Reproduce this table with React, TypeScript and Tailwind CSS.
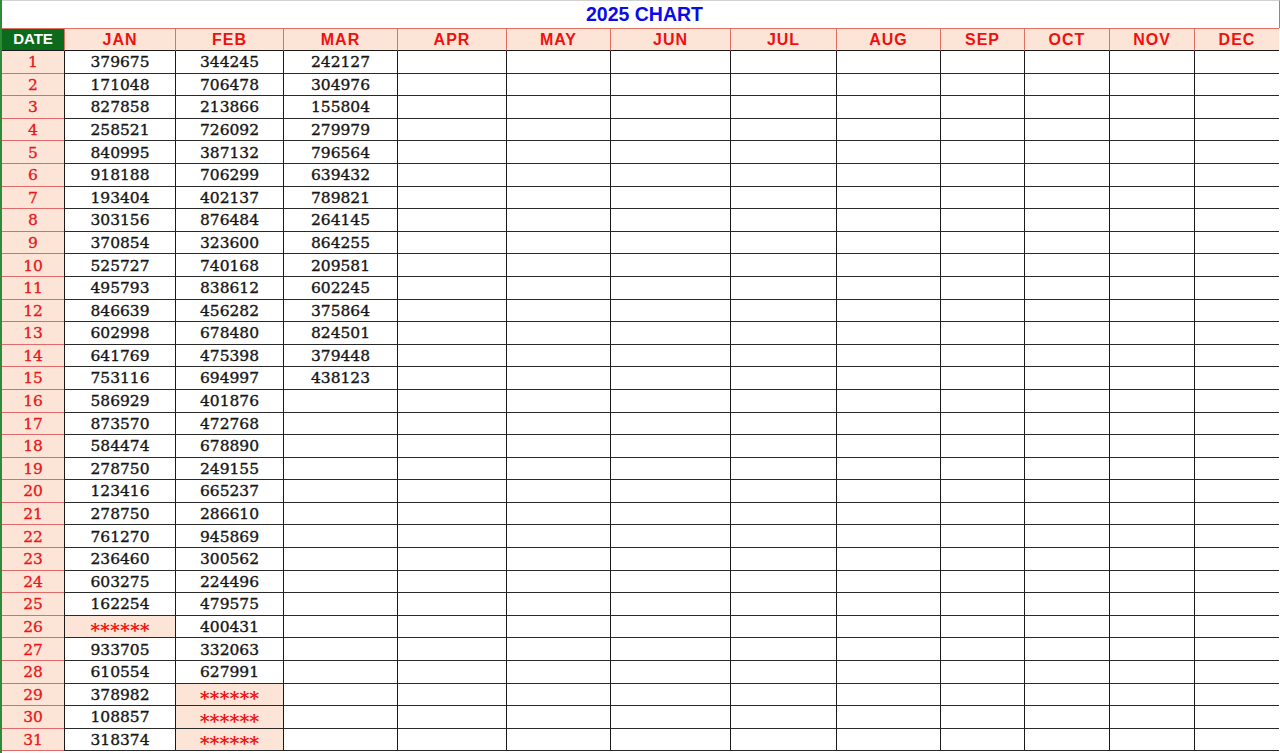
import React from 'react';

const MONTHS = ['JAN', 'FEB', 'MAR', 'APR', 'MAY', 'JUN', 'JUL', 'AUG', 'SEP', 'OCT', 'NOV', 'DEC'];

const STAR = '******';

// results per month, indexed by day - 1
const DATA: Record<string, string[]> = {
  JAN: [
    '379675', '171048', '827858', '258521', '840995', '918188', '193404', '303156', '370854', '525727',
    '495793', '846639', '602998', '641769', '753116', '586929', '873570', '584474', '278750', '123416',
    '278750', '761270', '236460', '603275', '162254', STAR, '933705', '610554', '378982', '108857', '318374',
  ],
  FEB: [
    '344245', '706478', '213866', '726092', '387132', '706299', '402137', '876484', '323600', '740168',
    '838612', '456282', '678480', '475398', '694997', '401876', '472768', '678890', '249155', '665237',
    '286610', '945869', '300562', '224496', '479575', '400431', '332063', '627991', STAR, STAR, STAR,
  ],
  MAR: [
    '242127', '304976', '155804', '279979', '796564', '639432', '789821', '264145', '864255', '209581',
    '602245', '375864', '824501', '379448', '438123',
  ],
};

const serif = { fontFamily: '"DejaVu Serif", serif' };

export default function App() {
  const days = Array.from({ length: 31 }, (_, i) => i + 1);

  return (
    <div
      className="w-[1280px] h-[753px] overflow-hidden bg-white border-l-2 border-l-[#2f8a3a]"
      style={{ fontFamily: '"Liberation Sans", Arial, sans-serif' }}
    >
      {/* title row */}
      <div className="h-[28px] w-[1278px] flex items-center justify-center border-t border-t-[#d0d0d0] border-r border-r-[#8a8a8a]">
        <span className="text-[19.5px] font-bold text-[#0b0be8] pl-[8px]">2025 CHART</span>
      </div>

      <div className="grid grid-cols-[62px_111px_108px_114px_109px_104px_120px_106px_104px_84px_85px_85px_85px] grid-rows-[23px_repeat(31,22.6px)]">
        {/* header */}
        <div className="bg-[#0b6a1c] text-white font-bold text-[15px] flex items-center justify-center border-t border-t-[#e07060] border-b border-b-[#1a1a1a]">
          DATE
        </div>
        {MONTHS.map((m) => (
          <div
            key={m}
            className="bg-[#fce4d6] text-[#f01010] font-bold text-[16px] tracking-[1px] flex items-center justify-center border-t border-t-[#e07060] border-l border-l-[#e07060] border-b border-b-[#1a1a1a]"
          >
            {m}
          </div>
        ))}

        {/* data rows */}
        {days.map((d) => (
          <React.Fragment key={d}>
            <div
              className="pt-[2px] bg-[#fce4d6] text-[#e8161c] text-[15.5px] flex items-center justify-center border-b border-b-[#e06a6a] [-webkit-text-stroke:0.3px_#e8161c]"
              style={serif}
            >
              {d}
            </div>
            {MONTHS.map((m) => {
              const v = DATA[m]?.[d - 1];
              const star = v === STAR;
              return (
                <div
                  key={m}
                  className={`pt-[2px] flex items-center justify-center border-l border-l-[#1a1a1a] border-b border-b-[#2a2a2a] ${
                    star
                      ? 'bg-[#fce4d6] text-[#f01010] font-bold text-[19px] leading-none'
                      : 'text-[#161616] text-[15.5px] [-webkit-text-stroke:0.35px_#161616]'
                  }`}
                  style={serif}
                >
                  {star ? <span className="leading-none translate-y-[3px]">{v}</span> : v ?? ''}
                </div>
              );
            })}
          </React.Fragment>
        ))}
      </div>
    </div>
  );
}
